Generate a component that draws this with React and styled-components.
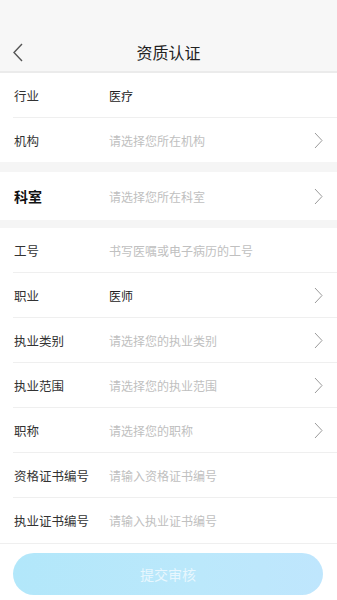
import React from 'react';
import styled, { createGlobalStyle } from 'styled-components';

const GlobalStyle = createGlobalStyle`
  html, body {
    margin: 0;
    padding: 0;
    background: #fff;
  }
  body {
    font-family: "Noto Sans CJK SC", "Noto Sans", sans-serif;
  }
`;

const Page = styled.div`
  width: 337px;
  min-height: 600px;
  background: #fff;
`;

const Header = styled.div`
  background: #f7f7f7;
  padding-top: 34px;
  border-bottom: 2px solid #ebebeb;
`;

const NavBar = styled.div`
  position: relative;
  height: 37px;
  display: flex;
  align-items: center;
  justify-content: center;
`;

const Back = styled.div`
  position: absolute;
  left: 12px;
  top: 8px;
  width: 14px;
  height: 20px;
  display: flex;
  align-items: center;
`;

const Title = styled.div`
  font-size: 16px;
  color: #222;
  margin-top: -2px;
`;

const Gap = styled.div`
  height: ${p => p.h}px;
  background: #f5f5f5;
`;

const Row = styled.div`
  height: ${p => p.h || 45}px;
  box-sizing: border-box;
  margin-left: 13px;
  padding-right: 14px;
  display: flex;
  align-items: center;
  border-bottom: ${p => (p.last ? 'none' : '1px solid #efefef')};
`;

const Label = styled.div`
  width: 95px;
  padding-left: 1px;
  font-size: ${p => (p.bold ? 14 : 12.5)}px;
  font-weight: ${p => (p.bold ? 700 : 400)};
  color: ${p => (p.bold ? '#111' : '#333')};
`;

const Value = styled.div`
  flex: 1;
  font-size: 12px;
  color: ${p => (p.placeholder ? '#c0c0c0' : '#222')};
`;

const Footer = styled.div`
  border-top: 1px solid #efefef;
  padding: 9px 14px 5px 13px;
`;

const Submit = styled.button`
  width: 310px;
  height: 42px;
  border: none;
  border-radius: 21px;
  background: linear-gradient(90deg, #b2e7fa 0%, #bbe8fb 60%, #bfe6fd 100%);
  color: #e8f7fe;
  font-size: 14px;
  font-family: inherit;
  display: flex;
  align-items: center;
  justify-content: center;
`;

const Chevron = () => (
  <svg width="9" height="17" viewBox="0 0 9 17">
    <path d="M1 1 L8 8.5 L1 16" fill="none" stroke="#9a9a9a" strokeWidth="1" />
  </svg>
);

const BackIcon = () => (
  <svg width="11" height="19" viewBox="0 0 11 19">
    <path d="M10 1 L2 9.5 L10 18" fill="none" stroke="#555" strokeWidth="1.4" />
  </svg>
);

const Field = ({ label, value, placeholder, arrow, last, h, bold }) => (
  <Row last={last} h={h}>
    <Label bold={bold}>{label}</Label>
    <Value placeholder={placeholder ? 1 : 0}>{value || placeholder}</Value>
    {arrow && <Chevron />}
  </Row>
);

const App = () => (
  <Page>
    <GlobalStyle />
    <Header>
      <NavBar>
        <Back><BackIcon /></Back>
        <Title>资质认证</Title>
      </NavBar>
    </Header>

    <Field label="行业" value="医疗" />
    <Field label="机构" placeholder="请选择您所在机构" arrow last h={44} />
    <Gap h={10} />
    <Field label="科室" bold placeholder="请选择您所在科室" arrow last h={48} />
    <Gap h={8} />
    <Field label="工号" placeholder="书写医嘱或电子病历的工号" />
    <Field label="职业" value="医师" arrow />
    <Field label="执业类别" placeholder="请选择您的执业类别" arrow />
    <Field label="执业范围" placeholder="请选择您的执业范围" arrow />
    <Field label="职称" placeholder="请选择您的职称" arrow />
    <Field label="资格证书编号" placeholder="请输入资格证书编号" />
    <Field label="执业证书编号" placeholder="请输入执业证书编号" last />
    <Footer>
      <Submit>提交审核</Submit>
    </Footer>
  </Page>
);

export default App;
